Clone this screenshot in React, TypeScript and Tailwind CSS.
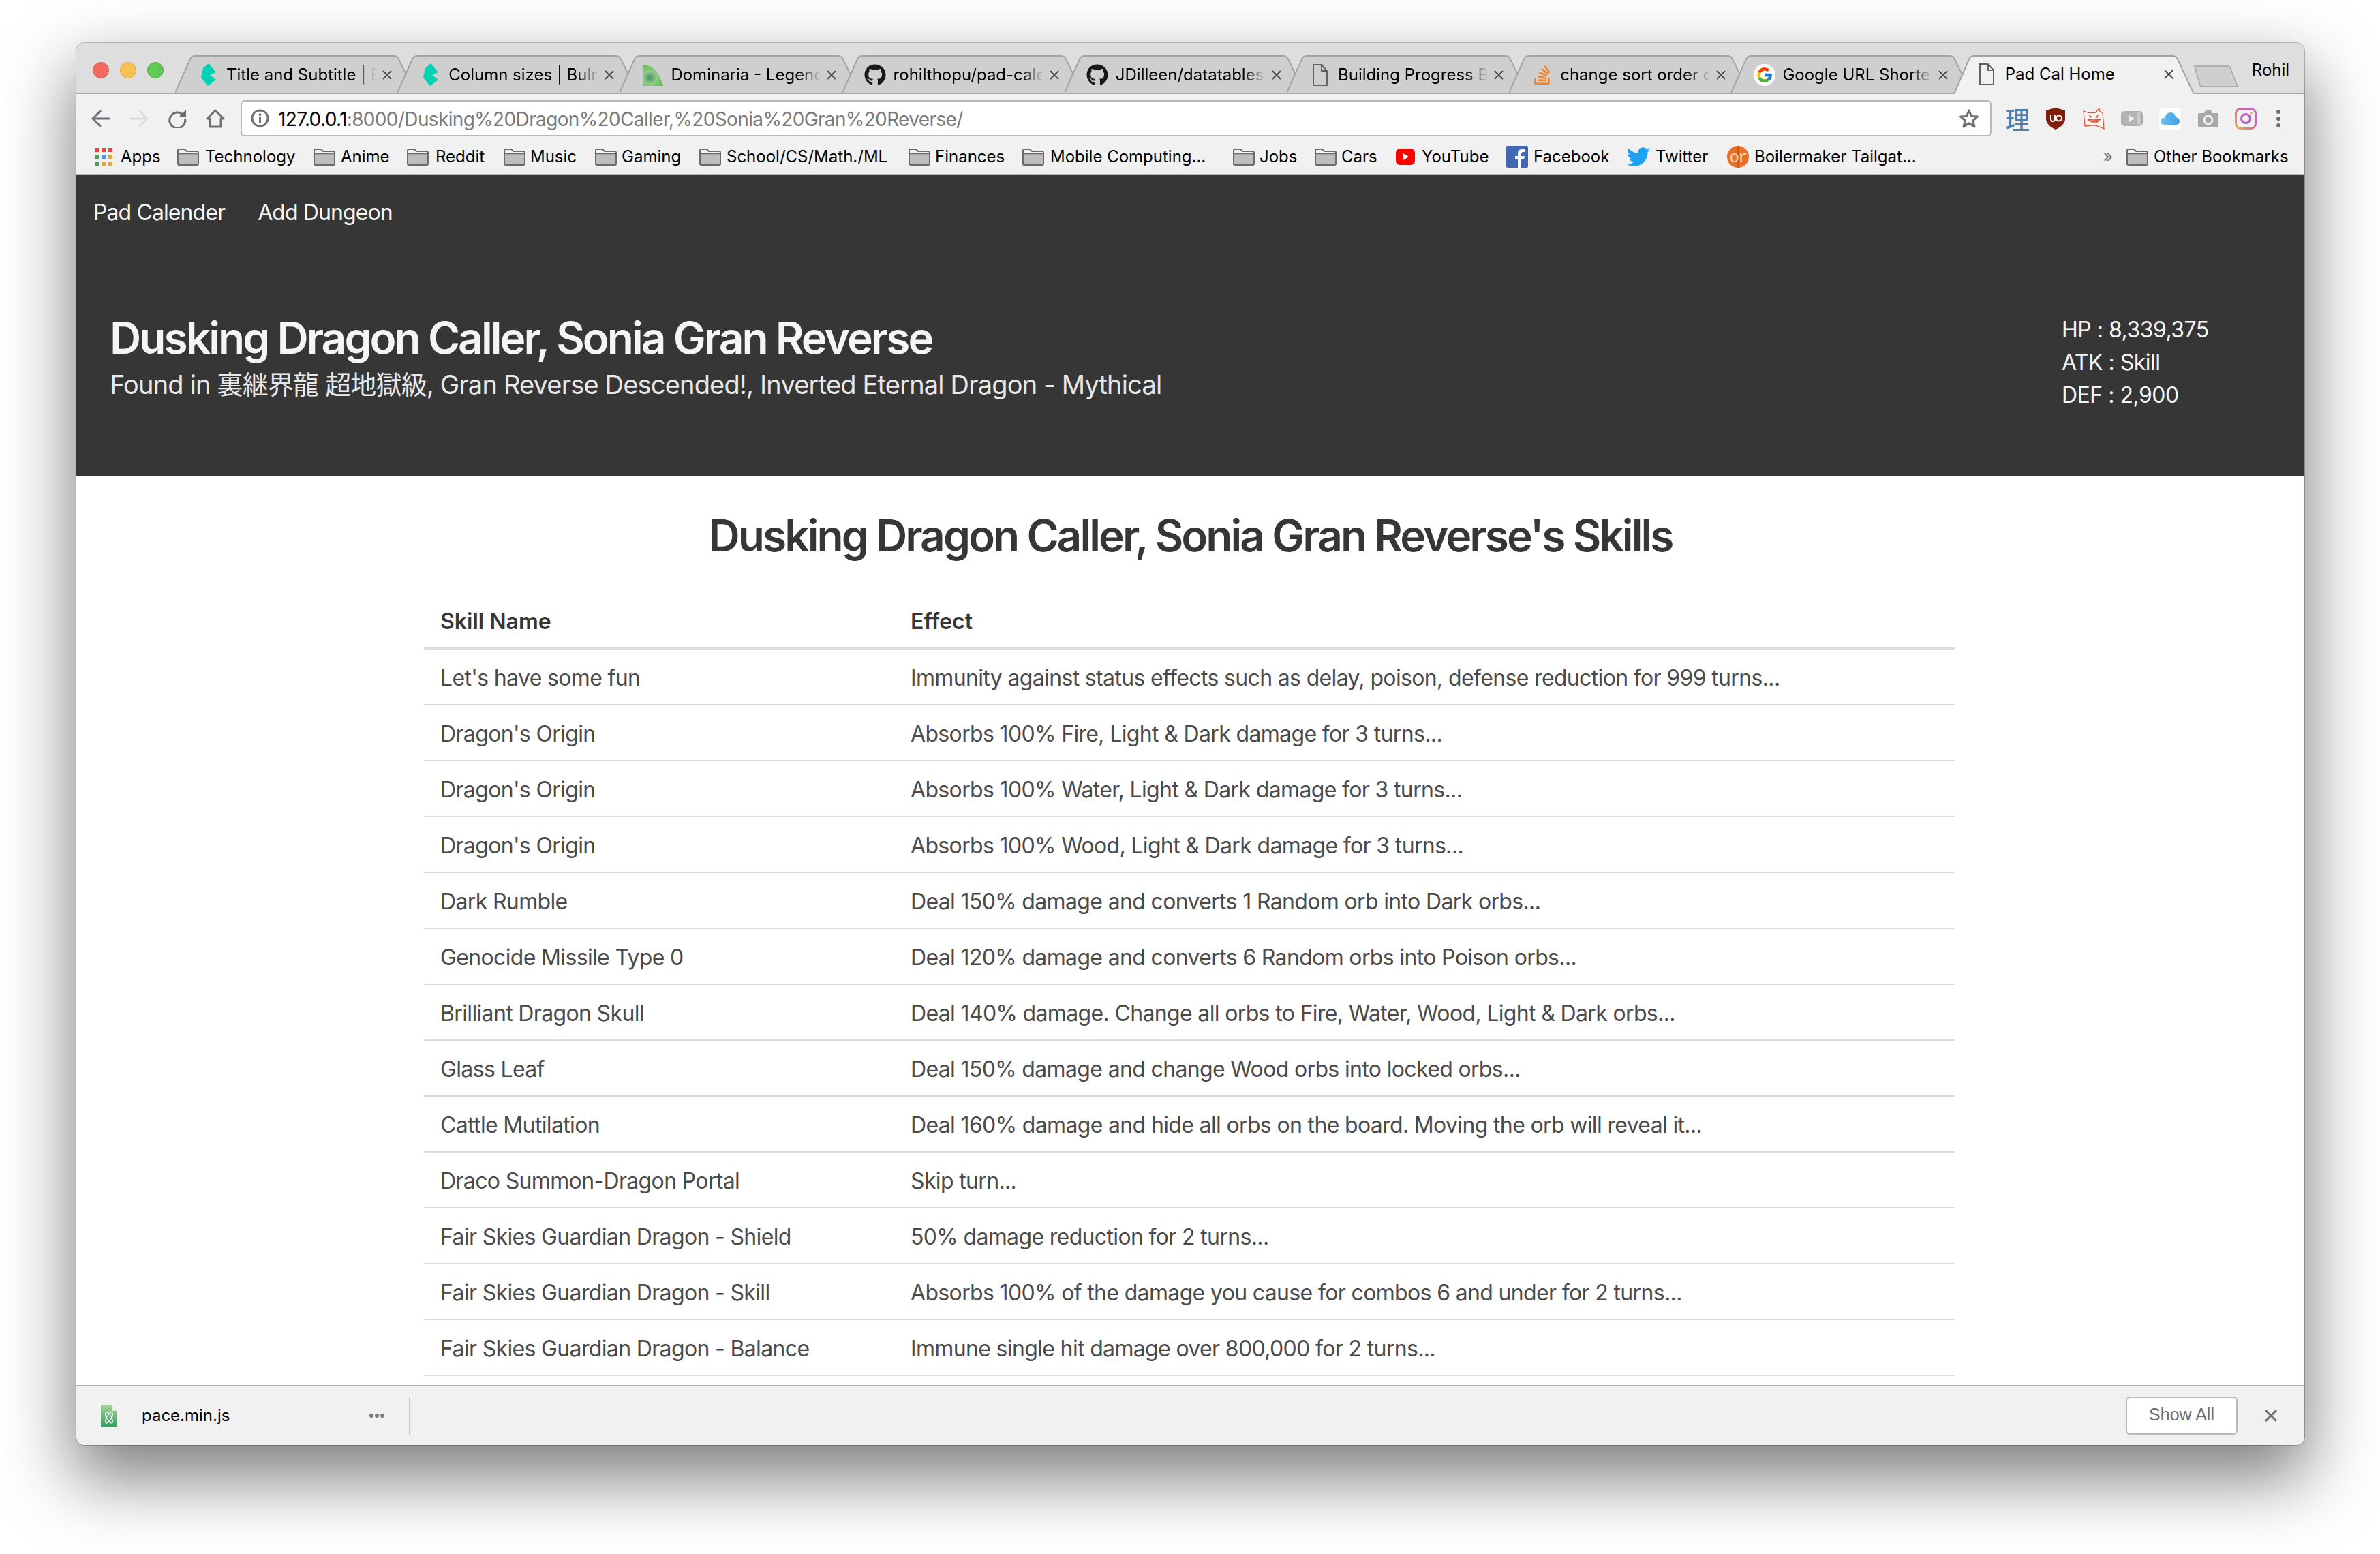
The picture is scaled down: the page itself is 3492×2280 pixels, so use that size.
import React from 'react';
import { FaGithub, FaStackOverflow, FaTwitter } from 'react-icons/fa';
import { FcGoogle } from 'react-icons/fc';

const BulmaIcon = () => (
  <svg viewBox="0 0 22 33" className="h-[33px] w-[22px]">
    <path d="M0 21 L3 7 L11 0 L22 13 L13 17 L22 24 L10 33 Z" fill="#00d1b2" />
  </svg>
);

const DominariaIcon = () => (
  <svg viewBox="0 0 30 33" className="h-[33px] w-[30px]">
    <defs>
      <radialGradient id="dom" cx="0.35" cy="0.6" r="0.7">
        <stop offset="0" stopColor="#4f8f63" />
        <stop offset="0.45" stopColor="#8fc98a" />
        <stop offset="1" stopColor="#5fbf45" />
      </radialGradient>
    </defs>
    <path d="M0 33 L0 3 Q20 0 30 33 Z" fill="url(#dom)" />
  </svg>
);

const PageIcon = () => (
  <svg viewBox="0 0 22 32" className="h-[32px] w-[22px]" fill="none" stroke="#5f6368" strokeWidth="2">
    <path d="M1 1 H13 L21 10 V31 H1 Z M13 1 V10 H21" />
  </svg>
);

const Folder = () => (
  <svg viewBox="0 0 32 25" className="h-[25px] w-[32px] shrink-0">
    <path d="M1 3 Q1 1 3 1 H11 L14 4 H29 Q31 4 31 6 V22 Q31 24 29 24 H3 Q1 24 1 22 Z" fill="#f4f4f4" stroke="#6b6b6b" strokeWidth="2" />
    <path d="M2 8 H30 V22 Q30 23 29 23 H3 Q2 23 2 22 Z" fill="#bdbdbd" />
    <path d="M1 7.5 H31" stroke="#6b6b6b" strokeWidth="1.5" />
  </svg>
);

const AppsIcon = () => {
  const colors = ['#e5453a', '#e5453a', '#e5453a', '#4f9a5a', '#4a8fee', '#e8a43a', '#4f9a5a', '#e8a43a', '#e8a43a'];
  return (
    <div className="grid h-[26px] w-[26px] shrink-0 grid-cols-3 gap-[4px]">
      {colors.map((c, i) => (
        <span key={i} className="block h-[6px] w-[6px]" style={{ backgroundColor: c }} />
      ))}
    </div>
  );
};

const YoutubeIcon = () => (
  <svg viewBox="0 0 28 28" className="h-[28px] w-[28px] shrink-0">
    <rect x="0" y="2" width="28" height="24" rx="6" fill="#f00" />
    <path d="M11 9 L19 14 L11 19 Z" fill="#fff" />
  </svg>
);

const FacebookIcon = () => (
  <svg viewBox="0 0 32 32" className="h-[32px] w-[32px] shrink-0">
    <rect width="32" height="32" rx="2" fill="#4267b2" />
    <path d="M22 32 V20 H26 L27 15 H22 V12 Q22 9 25 9 H27 V5 H23 Q17 5 17 11 V15 H13 V20 H17 V32 Z" fill="#fff" />
  </svg>
);

const OrIcon = () => (
  <svg viewBox="0 0 32 32" className="h-[32px] w-[32px] shrink-0">
    <circle cx="16" cy="16" r="16" fill="#e8712a" />
    <path d="M16 0 V32" stroke="#c9561a" strokeWidth="2" />
    <text x="16" y="24" textAnchor="middle" fontSize="24" fill="#f6d9b8" fontFamily="Liberation Mono, monospace" letterSpacing="-2">or</text>
  </svg>
);

const tabs = [
  { title: 'Title and Subtitle | Bulma', icon: <BulmaIcon /> },
  { title: 'Column sizes | Bulma', icon: <BulmaIcon /> },
  { title: 'Dominaria - Legends', icon: <DominariaIcon /> },
  { title: 'rohilthopu/pad-calendar', icon: <FaGithub className="text-[32px] text-[#1b1817]" /> },
  { title: 'JDilleen/datatables-plugin', icon: <FaGithub className="text-[32px] text-[#1b1817]" /> },
  { title: 'Building Progress Bars', icon: <PageIcon /> },
  { title: 'change sort order of', icon: <FaStackOverflow className="text-[32px] text-[#f48024]" /> },
  {
    title: 'Google URL Shortener',
    icon: (
      <span className="flex h-[32px] w-[32px] items-center justify-center rounded-full bg-white">
        <FcGoogle className="text-[26px]" />
      </span>
    ),
  },
];

const bookmarks = [
  { label: 'Apps', icon: <AppsIcon />, cls: 'w-[121px] gap-[12px]' },
  { label: 'Technology', icon: <Folder />, cls: 'w-[200px] gap-[9px]' },
  { label: 'Anime', icon: <Folder />, cls: 'w-[137px] gap-[8px]' },
  { label: 'Reddit', icon: <Folder />, cls: 'w-[142px] gap-[10px]' },
  { label: 'Music', icon: <Folder />, cls: 'w-[134px] gap-[7px]' },
  { label: 'Gaming', icon: <Folder />, cls: 'w-[153px] gap-[7px]' },
  { label: 'School/CS/Math./ML', icon: <Folder />, cls: 'w-[307px] gap-[8px]' },
  { label: 'Finances', icon: <Folder />, cls: 'w-[167px] gap-[7px]' },
  { label: 'Mobile Computing...', icon: <Folder />, cls: 'w-[309px] gap-[9px]' },
  { label: 'Jobs', icon: <Folder />, cls: 'w-[120px] gap-[7px]' },
  { label: 'Cars', icon: <Folder />, cls: 'w-[119px] gap-[7px]' },
  { label: 'YouTube', icon: <YoutubeIcon />, cls: 'w-[162px] gap-[10px]' },
  { label: 'Facebook', icon: <FacebookIcon />, cls: 'w-[177px] gap-[8px]' },
  { label: 'Twitter', icon: <FaTwitter className="shrink-0 text-[34px] text-[#1da1f2]" />, cls: 'w-[147px] gap-[8px]' },
  { label: 'Boilermaker Tailgat...', icon: <OrIcon />, cls: 'w-[500px] gap-[8px]' },
];

const skills = [
  ["Let's have some fun", 'Immunity against status effects such as delay, poison, defense reduction for 999 turns...'],
  ["Dragon's Origin", 'Absorbs 100% Fire, Light & Dark damage for 3 turns...'],
  ["Dragon's Origin", 'Absorbs 100% Water, Light & Dark damage for 3 turns...'],
  ["Dragon's Origin", 'Absorbs 100% Wood, Light & Dark damage for 3 turns...'],
  ['Dark Rumble', 'Deal 150% damage and converts 1 Random orb into Dark orbs...'],
  ['Genocide Missile Type 0', 'Deal 120% damage and converts 6 Random orbs into Poison orbs...'],
  ['Brilliant Dragon Skull', 'Deal 140% damage. Change all orbs to Fire, Water, Wood, Light & Dark orbs...'],
  ['Glass Leaf', 'Deal 150% damage and change Wood orbs into locked orbs...'],
  ['Cattle Mutilation', 'Deal 160% damage and hide all orbs on the board. Moving the orb will reveal it...'],
  ['Draco Summon-Dragon Portal', 'Skip turn...'],
  ['Fair Skies Guardian Dragon - Shield', '50% damage reduction for 2 turns...'],
  ['Fair Skies Guardian Dragon - Skill', 'Absorbs 100% of the damage you cause for combos 6 and under for 2 turns...'],
  ['Fair Skies Guardian Dragon - Balance', 'Immune single hit damage over 800,000 for 2 turns...'],
];

function Tab({ title, icon, active }: { title: string; icon: React.ReactNode; active?: boolean }) {
  return (
    <div className={active ? 'relative z-10 -mr-[25.8px] h-[57px] w-[352px] shrink-0 -mb-[2px]' : 'relative -mr-[25.8px] h-[55px] w-[352px] shrink-0'}>
      <svg viewBox="0 0 352 57" preserveAspectRatio="none" className="absolute inset-0 h-full w-full">
        <path
          d="M0 57 L22 6 Q24 1 30 1 L320 1 Q326 1 328 6 L352 57"
          fill={active ? '#f1f1f1' : '#cfcfcf'}
          stroke="#a3a3a3"
          strokeWidth="2"
        />
      </svg>
      <div className={active ? 'relative flex h-full items-center pb-[2px]' : 'relative flex h-full items-center pt-[2px]'}>
        <div className="flex w-[75px] justify-center pl-[22px]">{icon}</div>
        <div className={active ? 'w-[225px] overflow-hidden whitespace-nowrap' : 'w-[220px] overflow-hidden whitespace-nowrap [mask-image:linear-gradient(to_right,black_85%,transparent)]'}>
          {title}
        </div>
        <svg viewBox="0 0 16 16" className={active ? 'absolute left-[307px] h-[16px] w-[16px]' : 'absolute left-[303px] h-[16px] w-[16px]'} stroke="#4a4a4a" strokeWidth="1.8">
          <path d="M2 2 L14 14 M14 2 L2 14" />
        </svg>
      </div>
    </div>
  );
}

function ExtensionIcons() {
  return (
    <div className="flex items-center">
      <div className="flex w-[56px] justify-center font-['Noto_Sans_CJK_TC'] text-[36px] leading-none font-medium text-[#4d7fae]">理</div>
      <div className="flex w-[56px] justify-center">
        <svg viewBox="0 0 28 32" className="h-[32px] w-[28px]">
          <path d="M14 0 L28 4 V18 Q26 27 14 32 Q2 27 0 18 V4 Z" fill="#801e0d" />
          <path d="M7 11 V17 Q7 20 10 20 Q13 20 13 17 V11 M15 15.5 a4 4 0 1 0 8 0 a4 4 0 1 0 -8 0" fill="none" stroke="#fff" strokeWidth="2" />
        </svg>
      </div>
      <div className="flex w-[56px] justify-center">
        <svg viewBox="0 0 32 32" className="h-[32px] w-[32px]" fill="none" stroke="#d9553f" strokeWidth="1.3">
          <path d="M1 5 Q10 9 19 7 L24 1 L25 6 L29 7 L31 31 Q20 25 12 26 L3 27 Z" fill="#fdf3ef" />
          <path d="M9 11 L14 14 M23 11 L18 14 M11 14 V15 M21 14 V15" />
          <path d="M7 17 Q16 25 26 17 Q16 19 7 17 M10 20 L23 20 M13 18.5 V23 M17 18.5 V23.5 M21 18.5 V22" />
        </svg>
      </div>
      <div className="flex w-[56px] justify-center">
        <svg viewBox="0 0 32 22" className="h-[22px] w-[32px]">
          <rect x="1" y="1" width="30" height="20" rx="4" fill="#b4b4b4" stroke="#9c9c9c" strokeWidth="1.5" />
          <rect x="24" y="2" width="6" height="18" rx="2" fill="#c9c9c9" />
          <path d="M12 6 L20 11 L12 16 Z" fill="#f1f1f1" />
        </svg>
      </div>
      <div className="flex w-[56px] justify-center">
        <div className="flex h-[32px] w-[32px] items-center justify-center rounded-[5px] bg-white">
          <svg viewBox="0 0 28 18" className="h-[18px] w-[28px]">
            <defs>
              <linearGradient id="cloud" x1="0" x2="1" y1="0" y2="0">
                <stop offset="0" stopColor="#6cc4f5" />
                <stop offset="1" stopColor="#3e9ee8" />
              </linearGradient>
            </defs>
            <path d="M6 18 Q0 18 0 13 Q0 8 6 8 Q8 0 15 0 Q22 1 22 7 Q28 8 28 13 Q28 18 22 18 Z" fill="url(#cloud)" />
          </svg>
        </div>
      </div>
      <div className="flex w-[55px] justify-center">
        <svg viewBox="0 0 30 26" className="h-[26px] w-[30px]">
          <path d="M2 5 H9 L11 1 H19 L21 5 H28 Q30 5 30 7 V24 Q30 26 28 26 H2 Q0 26 0 24 V7 Q0 5 2 5 Z" fill="#a8a8a8" />
          <circle cx="15" cy="15" r="6" fill="none" stroke="#f1f1f1" strokeWidth="3" />
        </svg>
      </div>
      <div className="flex w-[56px] justify-center">
        <svg viewBox="0 0 32 32" className="h-[32px] w-[32px]" fill="none">
          <defs>
            <linearGradient id="ig" x1="0" y1="1" x2="1" y2="0">
              <stop offset="0" stopColor="#f2a94e" />
              <stop offset="0.55" stopColor="#cf6a9a" />
              <stop offset="1" stopColor="#b46ac6" />
            </linearGradient>
          </defs>
          <rect x="1.5" y="1.5" width="29" height="29" rx="7" stroke="url(#ig)" strokeWidth="3" />
          <circle cx="16" cy="16" r="6.5" stroke="#b45cc0" strokeWidth="3" />
          <circle cx="24" cy="8" r="1.8" fill="#f0a24d" />
        </svg>
      </div>
      <div className="flex w-[40px] flex-col items-center gap-[4px]">
        <span className="h-[6px] w-[6px] rounded-full bg-[#6b6f73]" />
        <span className="h-[6px] w-[6px] rounded-full bg-[#6b6f73]" />
        <span className="h-[6px] w-[6px] rounded-full bg-[#6b6f73]" />
      </div>
    </div>
  );
}

export default function App() {
  return (
    <div className="h-[2280px] w-[3492px] overflow-hidden bg-white pt-[63px] pl-[112px] font-[Inter,'Noto_Sans_CJK_JP',sans-serif]">
      <div className="flex h-[2057px] w-[3269px] flex-col overflow-hidden rounded-[12px] bg-[#f1f1f1] shadow-[0_0_0_1px_rgba(0,0,0,0.25),0_44px_100px_6px_rgba(0,0,0,0.5)]">
        {/* tab strip */}
        <div className="flex h-[75px] shrink-0 items-end border-b-2 border-[#a8a8a8] bg-[#dedede] text-[24px] text-black">
          <div className="mb-[21px] ml-[24px] mr-[17px] flex gap-[16px] self-end">
            <span className="h-[24px] w-[24px] rounded-full border border-[#dc5a50] bg-[#f26a60]" />
            <span className="h-[24px] w-[24px] rounded-full border border-[#dea33f] bg-[#f8c14f]" />
            <span className="h-[24px] w-[24px] rounded-full border border-[#4fae47] bg-[#60c955]" />
          </div>
          {tabs.map((t) => (
            <Tab key={t.title} title={t.title} icon={t.icon} />
          ))}
          <Tab title="Pad Cal Home" icon={<PageIcon />} active />
          <svg viewBox="0 0 65 32" className="mb-[8px] ml-[26px] h-[32px] w-[65px] shrink-0">
            <path d="M1 1 H50 Q52 1 53 3 L64 31 H12 Q10 31 9 29 Z" fill="#cfcfcf" stroke="#a3a3a3" strokeWidth="1.5" />
          </svg>
          <span className="mb-[15px] ml-[20px]">Rohil</span>
        </div>

        {/* toolbar */}
        <div className="flex h-[71px] shrink-0 items-center">
          <div className="flex w-[241px] items-center pl-[22px] text-[#6b6f73]">
            <svg viewBox="0 0 28 28" className="mr-[28px] h-[28px] w-[28px]" fill="none" stroke="currentColor" strokeWidth="3" strokeLinecap="round">
              <path d="M26 14 H3 M13 3 L2 14 L13 25" />
            </svg>
            <svg viewBox="0 0 28 28" className="mr-[28px] h-[28px] w-[28px]" fill="none" stroke="#dcdcdc" strokeWidth="3" strokeLinecap="round">
              <path d="M2 14 H25 M15 3 L26 14 L15 25" />
            </svg>
            <svg viewBox="0 0 28 28" className="mr-[28px] h-[28px] w-[28px]" fill="none" stroke="currentColor" strokeWidth="3">
              <path d="M23 9 A11.5 11.5 0 1 0 25.5 14" />
              <path d="M27 1 V12 H16 Z" fill="currentColor" stroke="none" />
            </svg>
            <svg viewBox="0 0 28 28" className="h-[28px] w-[28px]" fill="none" stroke="currentColor" strokeWidth="3" strokeLinejoin="round">
              <path d="M2 14 L14 2 L26 14 H22 V26 H6 V14 Z" />
            </svg>
          </div>
          <div className="flex h-[53px] w-[2569px] shrink-0 items-center rounded-[6px] border-2 border-[#b8b8b8] bg-white pl-[13px] pr-[16px]">
            <svg viewBox="0 0 28 28" className="mr-[13px] h-[27px] w-[27px] shrink-0" fill="none">
              <circle cx="14" cy="14" r="12" stroke="#6b6f73" strokeWidth="3" />
              <circle cx="14" cy="8.5" r="2" fill="#6b6f73" />
              <path d="M14 12.5 V21" stroke="#6b6f73" strokeWidth="3" />
            </svg>
            <span className="pt-[2px] text-[28px] tracking-[-0.64px] whitespace-nowrap text-[#7a7a7a]">
              <span className="text-black">127.0.0.1</span>:8000/Dusking%20Dragon%20Caller,%20Sonia%20Gran%20Reverse/
            </span>
            <svg viewBox="0 0 30 30" className="ml-auto h-[30px] w-[30px] shrink-0" fill="none" stroke="#6b6f73" strokeWidth="3" strokeLinejoin="round">
              <path d="M15 3 L18.6 11.5 L27.5 12 L20.6 17.8 L23 27 L15 21.8 L7 27 L9.4 17.8 L2.5 12 L11.4 11.5 Z" />
            </svg>
          </div>
          <div className="ml-[10px]">
            <ExtensionIcons />
          </div>
        </div>

        {/* bookmarks bar */}
        <div className="flex h-[48px] shrink-0 items-center border-b-2 border-[#b4b4b4] pb-[4px] pl-[27px] text-[24px] text-black">
          {bookmarks.map((b) => (
            <div key={b.label} className={`flex shrink-0 items-center whitespace-nowrap ${b.cls}`}>
              {b.icon}
              <span>{b.label}</span>
            </div>
          ))}
          <span className="ml-[52px] w-[34px] text-[#6b6f73]">»</span>
          <div className="flex items-center gap-[8px] whitespace-nowrap">
            <Folder />
            <span>Other Bookmarks</span>
          </div>
        </div>

        {/* page */}
        <div className="min-h-0 flex-1 overflow-hidden bg-white">
          <div className="h-[441px] bg-[#363636] text-white">
            <nav className="flex gap-[48px] pt-[31px] pl-[25px] text-[32px] leading-[48px] tracking-[-0.9px] text-[#f5f5f5]">
              <span>Pad Calender</span>
              <span>Add Dungeon</span>
            </nav>
            <div className="mt-[124px] flex pl-[49px]">
              <div>
                <h1 className="text-[64px] leading-[72px] font-semibold tracking-[-2.95px] text-[#f5f5f5]">Dusking Dragon Caller, Sonia Gran Reverse</h1>
                <p className="mt-[8px] text-[38px] leading-[48px] tracking-[-0.82px] text-[#e8e8e8]">
                  Found in 裏継界龍 超地獄級, Gran Reverse Descended!, Inverted Eternal Dragon - Mythical
                </p>
              </div>
              <div className="ml-auto w-[356px] text-[32px] leading-[48px] tracking-[-0.5px] text-[#f5f5f5]">
                <div>HP : 8,339,375</div>
                <div>ATK : Skill</div>
                <div>DEF : 2,900</div>
              </div>
            </div>
          </div>

          <h2 className="mt-[52px] mb-[48px] text-center text-[64px] leading-[72px] font-semibold tracking-[-2.95px] text-[#363636]">
            Dusking Dragon Caller, Sonia Gran Reverse's Skills
          </h2>
          <table className="ml-[510px] w-[2246px] table-fixed text-[32px] tracking-[-0.65px] text-[#4a4a4a]">
            <thead>
              <tr className="h-[82px] border-b-4 border-[#dbdbdb] text-left text-[#363636]">
                <th className="w-[690px] px-6 pt-[3px] font-semibold tracking-normal">Skill Name</th>
                <th className="px-6 pt-[3px] font-semibold tracking-normal">Effect</th>
              </tr>
            </thead>
            <tbody>
              {skills.map((s, i) => (
                <tr key={i} className="h-[82px] border-b-2 border-[#dbdbdb]">
                  <td className="px-6 pt-[3px]">{s[0]}</td>
                  <td className="px-6 pt-[3px]">{s[1]}</td>
                </tr>
              ))}
            </tbody>
          </table>
        </div>

        {/* downloads bar */}
        <div className="flex h-[88px] shrink-0 items-center border-t-2 border-[#b4b4b4] bg-[#f1f1f1]">
          <svg viewBox="0 0 24 32" className="ml-[36px] h-[32px] w-[24px] shrink-0">
            <defs>
              <linearGradient id="file" x1="0" x2="0" y1="0" y2="1">
                <stop offset="0" stopColor="#a8d59a" />
                <stop offset="1" stopColor="#3b9a63" />
              </linearGradient>
            </defs>
            <path d="M0 0 H16 L24 9 V32 H0 Z" fill="url(#file)" />
            <path d="M16 0 L24 9 H16 Z" fill="#e4f2de" />
            <g fill="none" stroke="#fff" strokeWidth="1.2">
              <ellipse cx="12" cy="19" rx="9" ry="3.5" transform="rotate(60 12 19)" />
              <ellipse cx="12" cy="19" rx="9" ry="3.5" transform="rotate(120 12 19)" />
            </g>
          </svg>
          <span className="ml-[36px] w-[334px] text-[24px] text-black">pace.min.js</span>
          <div className="flex gap-[2px]">
            <span className="h-[6px] w-[6px] rounded-full bg-[#7a7a7a]" />
            <span className="h-[6px] w-[6px] rounded-full bg-[#7a7a7a]" />
            <span className="h-[6px] w-[6px] rounded-full bg-[#7a7a7a]" />
          </div>
          <div className="ml-[36px] h-[56px] w-[2px] bg-[#c8c8c8]" />
          <button className="ml-auto h-[56px] w-[164px] rounded-[6px] border-2 border-[#b8b8b8] bg-white pb-[2px] font-['Liberation_Sans'] text-[25px] text-[#6e6e6e]">
            Show All
          </button>
          <svg viewBox="0 0 18 18" className="mr-[40px] ml-[40px] h-[18px] w-[18px] shrink-0" stroke="#6e6e6e" strokeWidth="3">
            <path d="M1 1 L17 17 M17 1 L1 17" />
          </svg>
        </div>
      </div>
    </div>
  );
}
